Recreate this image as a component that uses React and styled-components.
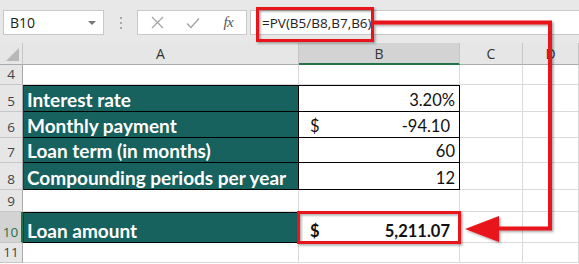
import React from "react";
import styled, { createGlobalStyle } from "styled-components";

const GlobalStyle = createGlobalStyle`
  html, body {
    margin: 0;
    padding: 0;
    background: #ffffff;
    overflow: hidden;
  }
  body {
    width: 579px;
    height: 264px;
    font-family: "Open Sans", "Liberation Sans", sans-serif;
  }
`;

const Page = styled.div`
  position: relative;
  width: 579px;
  height: 264px;
  overflow: hidden;
  background: #ffffff;
`;

const Toolbar = styled.div`
  display: flex;
  align-items: flex-start;
  height: 43px;
  box-sizing: border-box;
  padding: 10px 0 0 3px;
  background: #e8e8e8;
`;

const Box = styled.div`
  display: flex;
  align-items: center;
  box-sizing: border-box;
  height: 25px;
  width: ${(p) => p.$w || "auto"};
  flex: ${(p) => (p.$grow ? 1 : "none")};
  background: #ffffff;
  border: 1px solid #c8c8c8;
  border-right: ${(p) => (p.$grow ? "none" : "1px solid #c8c8c8")};
  margin-right: ${(p) => p.$mr || "0"};
`;

const NameText = styled.span`
  flex: 1;
  padding-left: 6px;
  font-family: "Open Sans", sans-serif;
  font-size: 14px;
  color: #222;
`;

const Caret = styled.span`
  width: 0;
  height: 0;
  margin-right: 7px;
  border-left: 4px solid transparent;
  border-right: 4px solid transparent;
  border-top: 4px solid #777;
`;

const Dots = styled.div`
  display: flex;
  flex-direction: column;
  justify-content: center;
  gap: 3px;
  width: 33px;
  height: 25px;
  align-items: center;
`;

const Dot = styled.span`
  width: 2px;
  height: 2px;
  background: #a8a8a8;
`;

const IconSlot = styled.span`
  display: flex;
  align-items: center;
  justify-content: center;
  width: 36px;
  color: #a6a6a6;
`;

const Fx = styled.span`
  font-family: "Liberation Serif", serif;
  font-style: italic;
  font-size: 15px;
  color: #555;
  letter-spacing: -0.5px;
`;

const Formula = styled.span`
  padding-left: 11px;
  font-family: "Open Sans", sans-serif;
  font-size: 13.5px;
  color: #222;
`;

const Sheet = styled.div`
  display: grid;
  grid-template-columns: 23px 276px 161px 63px 1fr;
  grid-template-rows: 22px 20px 27px 26px 25px 27px 22px 31px 20px;
`;

const Corner = styled.div`
  position: relative;
  background: #e6e6e6;
  border-right: 1px solid #c6c6c6;
  border-bottom: 1px solid #ababab;
  &::after {
    content: "";
    position: absolute;
    right: 3px;
    bottom: 3px;
    border-left: 13px solid transparent;
    border-bottom: 13px solid #b8b8b8;
  }
`;

const ColHead = styled.div`
  display: flex;
  align-items: center;
  justify-content: center;
  font-family: "Open Sans", sans-serif;
  font-size: 14px;
  color: #333;
  background: ${(p) => (p.$active ? "#d3d3d3" : "#e6e6e6")};
  border-right: 1px solid #c6c6c6;
  border-bottom: ${(p) => (p.$active ? "2px solid #217346" : "1px solid #ababab")};
  box-sizing: border-box;
`;

const RowHead = styled.div`
  display: flex;
  align-items: flex-end;
  justify-content: center;
  padding-bottom: 1px;
  box-sizing: border-box;
  font-family: "Open Sans", sans-serif;
  font-size: 13.5px;
  color: ${(p) => (p.$active ? "#217346" : "#444")};
  background: ${(p) => (p.$active ? "#d3d3d3" : "#e6e6e6")};
  border-right: ${(p) => (p.$active ? "2px solid #217346" : "1px solid #ababab")};
  border-bottom: 1px solid #c6c6c6;
`;

const Cell = styled.div`
  display: flex;
  align-items: flex-end;
  box-sizing: border-box;
  padding: 0 4px 0 4px;
  font-family: "Lato", "Open Sans", sans-serif;
  font-size: 16.5px;
  color: #111;
  background: #ffffff;
  border-right: 1px solid #dadada;
  border-bottom: 1px solid #dadada;
`;

const Label = styled(Cell)`
  background: #17615f;
  color: #ffffff;
  font-weight: 700;
  font-size: 19px;
  padding-left: 3px;
  padding-bottom: 0;
  border: none;
  border-right: 1px solid #000;
  border-bottom: 1px solid #000;
  border-top: ${(p) => (p.$top ? "1px solid #000" : "none")};
  border-left: 1px solid #1a3f3e;
`;

const Value = styled(Cell)`
  justify-content: ${(p) => (p.$split ? "space-between" : "flex-end")};
  padding-right: ${(p) => p.$pr || "4px"};
  padding-left: 11px;
  padding-bottom: 1px;
  font-weight: ${(p) => (p.$bold ? 700 : 400)};
  border-right: 1px solid #000;
  border-bottom: 1px solid #000;
  border-top: ${(p) => (p.$top ? "1px solid #000" : "none")};
`;

const Overlay = styled.svg`
  position: absolute;
  left: 0;
  top: 0;
  pointer-events: none;
`;

const labels = [
  { row: 5, text: "Interest rate" },
  { row: 6, text: "Monthly payment" },
  { row: 7, text: "Loan term (in months)" },
  { row: 8, text: "Compounding periods per year" },
];

const values = [
  { right: "3.20%" },
  { left: "$", right: "-94.10", pr: "9px" },
  { right: "60" },
  { right: "12" },
];

const Blank = ({ n }) =>
  Array.from({ length: n }).map((_, i) => <Cell key={i} />);

export default function App() {
  return (
    <Page>
      <GlobalStyle />
      <Toolbar>
        <Box $w="101px">
          <NameText>B10</NameText>
          <Caret />
        </Box>
        <Dots>
          <Dot />
          <Dot />
          <Dot />
        </Dots>
        <Box $w="110px" $mr="3px">
          <IconSlot style={{ marginLeft: 2 }}>
            <svg width="13" height="13" viewBox="0 0 13 13">
              <path d="M1 1 L12 12 M12 1 L1 12" stroke="#a6a6a6" strokeWidth="1.3" />
            </svg>
          </IconSlot>
          <IconSlot>
            <svg width="14" height="12" viewBox="0 0 14 12">
              <path d="M1 6.5 L5 10.5 L13 1.5" stroke="#a6a6a6" strokeWidth="1.5" fill="none" />
            </svg>
          </IconSlot>
          <IconSlot>
            <Fx>fx</Fx>
          </IconSlot>
        </Box>
        <Box $grow>
          <Formula>=PV(B5/B8,B7,B6)</Formula>
        </Box>
      </Toolbar>

      <Sheet>
        <Corner />
        <ColHead>A</ColHead>
        <ColHead $active>B</ColHead>
        <ColHead>C</ColHead>
        <ColHead>D</ColHead>

        <RowHead>4</RowHead>
        <Blank n={4} />

        {labels.map((l, i) => (
          <React.Fragment key={l.row}>
            <RowHead>{l.row}</RowHead>
            <Label $top={i === 0}>{l.text}</Label>
            <Value $top={i === 0} $split={!!values[i].left} $pr={values[i].pr}>
              {values[i].left && <span>{values[i].left}</span>}
              <span>{values[i].right}</span>
            </Value>
            <Blank n={2} />
          </React.Fragment>
        ))}

        <RowHead>9</RowHead>
        <Blank n={4} />

        <RowHead $active>10</RowHead>
        <Label $top>Loan amount</Label>
        <Value $top $split $bold $pr="9px">
          <span>$</span>
          <span>5,211.07</span>
        </Value>
        <Blank n={2} />

        <RowHead>11</RowHead>
        <Blank n={4} />
      </Sheet>

      <Overlay width="579" height="264" viewBox="0 0 579 264">
        <defs>
          <filter id="sh" x="-10%" y="-10%" width="130%" height="130%">
            <feDropShadow dx="1.5" dy="1.5" stdDeviation="1" floodColor="#000" floodOpacity="0.35" />
          </filter>
        </defs>
        <g filter="url(#sh)">
          <rect x="257.5" y="8.5" width="115" height="32" fill="none" stroke="#e8141b" strokeWidth="3" />
          <rect x="298.5" y="212.5" width="161" height="30" fill="none" stroke="#e8141b" strokeWidth="3" />
          <path
            d="M373 22.5 H550 V228.5 H497"
            fill="none"
            stroke="#e8141b"
            strokeWidth="4"
          />
          <path d="M465 229 L499 216 L499 242 Z" fill="#e8141b" />
        </g>
      </Overlay>
    </Page>
  );
}
